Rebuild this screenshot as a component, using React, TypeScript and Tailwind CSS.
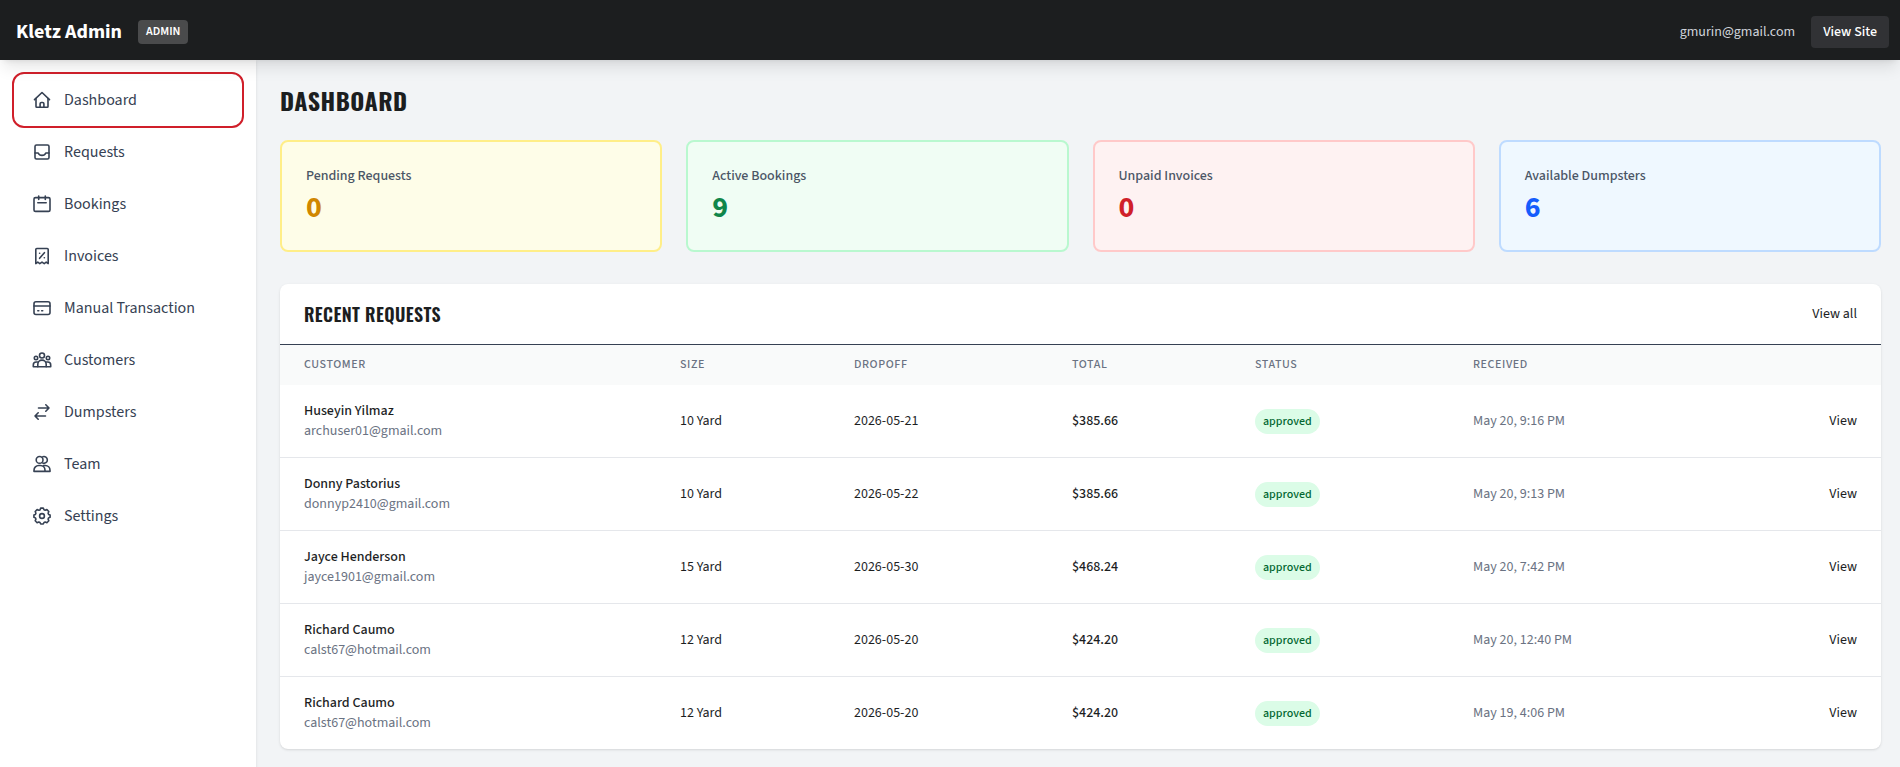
import clsx from 'clsx'

type IconProps = { children: React.ReactNode }

const Icon = ({ children }: IconProps) => (
  <svg
    viewBox="0 0 20 20"
    className="h-5 w-5 shrink-0"
    fill="none"
    stroke="currentColor"
    strokeWidth="1.6"
    strokeLinecap="round"
    strokeLinejoin="round"
    aria-hidden="true"
  >
    {children}
  </svg>
)

const navItems = [
  {
    label: 'Dashboard',
    icon: (
      <>
        <path d="M2.5 9.6 10 2.500l7.500 7.100" />
        <path d="M4 8.500v8c0 .4.300.7.700.7h10.600c.4 0 .7-.3.7-.7v-8" />
        <path d="M8.100 17v-3.200c0-.8.600-1.300 1.300-1.300h1.200c.7 0 1.300.5 1.300 1.300V17" />
      </>
    ),
  },
  {
    label: 'Requests',
    icon: (
      <>
        <rect x="3" y="3" width="14" height="14" rx="1.5" />
        <path d="M3 11h3.200c.6 1.500 2 2.400 3.800 2.400s3.200-.9 3.800-2.400H17" />
      </>
    ),
  },
  {
    label: 'Bookings',
    icon: (
      <>
        <rect x="2" y="3.600" width="16" height="13.800" rx="1.500" />
        <path d="M6.700 2v3.400M13.300 2v3.400M5.800 8.800h8.400" />
      </>
    ),
  },
  {
    label: 'Invoices',
    icon: (
      <>
        <path d="M3.800 17.600V3.500c0-.6.4-1 1-1h10.400c.6 0 1 .4 1 1v14.100l-2-1.500-2 1.500-2.200-1.500-2.200 1.500-2-1.500z" />
        <path d="M7.600 12.300l4.800-5.600" />
        <path d="M7.600 7.200h.1M12.300 11.800h.1" />
      </>
    ),
  },
  {
    label: 'Manual Transaction',
    icon: (
      <>
        <rect x="2" y="3.800" width="16" height="12.700" rx="2" />
        <path d="M2 8h16M5.800 12.700h1M9.700 12.700h1" />
      </>
    ),
  },
  {
    label: 'Customers',
    icon: (
      <>
        <circle cx="10" cy="5.500" r="2.500" />
        <circle cx="4" cy="8" r="1.700" />
        <circle cx="16" cy="8" r="1.700" />
        <path d="M5.800 16.800v-2.500a4.200 4.200 0 0 1 8.400 0v2.500" />
        <path d="M5.500 12H4.200a2.900 2.900 0 0 0-2.900 2.900v1.900h17.400v-1.900a2.900 2.900 0 0 0-2.900-2.900h-1.300" />
      </>
    ),
  },
  {
    label: 'Dumpsters',
    icon: <path d="M6.500 6H17M13.800 2.800 17 6l-3.200 3.200M13.500 14H3M6.200 10.800 3 14l3.200 3.200" />,
  },
  {
    label: 'Team',
    icon: (
      <>
        <circle cx="7.600" cy="5.900" r="3.400" />
        <path d="M10.800 2.700a3.400 3.400 0 1 1 0 6.400" />
        <path d="M2 17.400v-1.200a4.700 4.700 0 0 1 4.700-4.700h1.600a4.700 4.700 0 0 1 4.700 4.700v1.200zM13 17.400h5v-1.200a4.700 4.700 0 0 0-4.700-4.700h-1.800" />
      </>
    ),
  },
  {
    label: 'Settings',
    icon: (
      <>
        <circle cx="10" cy="10" r="2.400" />
        <path d="M8.700 2.100h2.600l.7 1.700 1.200.5 1.700-.7 1.900 1.900-.7 1.700.5 1.200 1.500.6v2.200l-1.500.7-.5 1.200.7 1.700-1.900 1.900-1.700-.7-1.200.5-.7 1.500H8.700L8 16.500l-1.200-.5-1.700.7-1.900-1.900.7-1.700-.5-1.200-1.500-.7V9l1.500-.6.5-1.200-.7-1.700 1.900-1.900 1.700.7L8 3.900z" />
      </>
    ),
  },
]

const stats = [
  { label: 'Pending Requests', value: 0, box: 'border-[#ffee88] bg-[#fefde8]', number: 'text-[#d08700]' },
  { label: 'Active Bookings', value: 9, box: 'border-[#b9f8cf] bg-[#f0fdf4]', number: 'text-[#10864a]' },
  { label: 'Unpaid Invoices', value: 0, box: 'border-[#ffc9c9] bg-[#fef2f2]', number: 'text-[#d01f2a]' },
  { label: 'Available Dumpsters', value: 6, box: 'border-[#bedbff] bg-[#eff8ff]', number: 'text-[#155dfc]' },
]

const requests = [
  { name: 'Huseyin Yilmaz', email: 'archuser01@gmail.com', size: '10 Yard', dropoff: '2026-05-21', total: '$385.66', received: 'May 20, 9:16 PM' },
  { name: 'Donny Pastorius', email: 'donnyp2410@gmail.com', size: '10 Yard', dropoff: '2026-05-22', total: '$385.66', received: 'May 20, 9:13 PM' },
  { name: 'Jayce Henderson', email: 'jayce1901@gmail.com', size: '15 Yard', dropoff: '2026-05-30', total: '$468.24', received: 'May 20, 7:42 PM' },
  { name: 'Richard Caumo', email: 'calst67@hotmail.com', size: '12 Yard', dropoff: '2026-05-20', total: '$424.20', received: 'May 20, 12:40 PM' },
  { name: 'Richard Caumo', email: 'calst67@hotmail.com', size: '12 Yard', dropoff: '2026-05-20', total: '$424.20', received: 'May 19, 4:06 PM' },
]

const Header = () => (
  <header className="relative z-10 flex items-center justify-between bg-[#1c1e1f] pt-4 pr-[11px] pb-3 pl-4 shadow-lg">
    <div className="flex items-center gap-4">
      <span className="text-xl leading-6 font-bold text-white">Kletz Admin</span>
      <span className="rounded bg-[#4a4b4c] px-2 py-1 text-xs font-semibold text-white">ADMIN</span>
    </div>
    <div className="flex items-center gap-4">
      <span className="text-sm text-gray-300">gmurin@gmail.com</span>
      <a href="#site" className="rounded bg-[#313235] px-3 py-1.5 text-sm font-medium text-white">
        View Site
      </a>
    </div>
  </header>
)

const Sidebar = () => (
  <aside className="w-64 shrink-0 bg-white p-4 shadow-sm">
    <nav className="flex flex-col gap-1">
      {navItems.map((item, i) => (
        <a
          key={item.label}
          href={`#${item.label.toLowerCase().replace(' ', '-')}`}
          className={clsx(
            'flex h-12 items-center gap-3 rounded-lg px-4 text-base text-gray-700',
            i === 0 && 'outline-2 outline-offset-2 outline-[#d01f2a]'
          )}
        >
          <Icon>{item.icon}</Icon>
          {item.label}
        </a>
      ))}
    </nav>
  </aside>
)

const RecentRequests = () => (
  <section className="mt-8 overflow-hidden rounded-lg bg-white shadow-sm">
    <div className="flex items-center justify-between border-b border-gray-700 px-6 py-4">
      <h2 className="font-['Oswald','Noto_Sans_CJK_SC',sans-serif] text-lg font-semibold tracking-[0.02em]">RECENT REQUESTS</h2>
      <a href="#requests" className="text-sm">View all</a>
    </div>
    <table className="w-full text-left text-sm">
      <thead className="bg-[#f9fafa] text-xs tracking-wider text-gray-500">
        <tr className="h-10">
          <th className="w-[400px] pl-6 font-medium">CUSTOMER</th>
          <th className="w-[174px] font-medium">SIZE</th>
          <th className="w-[218px] font-medium">DROPOFF</th>
          <th className="w-[183px] font-medium">TOTAL</th>
          <th className="w-[218px] font-medium">STATUS</th>
          <th className="font-medium">RECEIVED</th>
          <th />
        </tr>
      </thead>
      <tbody>
        {requests.map((r, i) => (
          <tr key={i} className="border-b border-gray-200 last:border-0">
            <td className="py-4 pl-6">
              <div className="font-medium">{r.name}</div>
              <div className="text-gray-500">{r.email}</div>
            </td>
            <td>{r.size}</td>
            <td>{r.dropoff}</td>
            <td className="font-medium">{r.total}</td>
            <td>
              <span className="rounded-full bg-[#dbfce7] px-2 py-1 text-xs font-medium text-green-800">approved</span>
            </td>
            <td className="text-gray-500">{r.received}</td>
            <td className="pr-6 text-right"><a href="#view">View</a></td>
          </tr>
        ))}
      </tbody>
    </table>
  </section>
)

export default function App() {
  return (
    <div className="flex min-h-screen flex-col bg-[#f2f4f6] font-['Source_Sans_3','Source_Sans_Pro','Noto_Sans_CJK_SC',sans-serif] text-[#1c1e1f]">
      <Header />
      <div className="flex grow">
        <Sidebar />
        <main className="min-w-0 grow py-6 pr-[19px] pl-6">
          <h1 className="font-['Oswald','Noto_Sans_CJK_SC',sans-serif] text-2xl font-bold tracking-[0.02em]">DASHBOARD</h1>
          <div className="mt-6 grid grid-cols-4 gap-6">
            {stats.map((s) => (
              <div key={s.label} className={clsx('h-28 rounded-lg border-2 p-6', s.box)}>
                <div className="text-sm font-medium text-gray-600">{s.label}</div>
                <div className={clsx('mt-1 text-3xl font-bold', s.number)}>{s.value}</div>
              </div>
            ))}
          </div>
          <RecentRequests />
        </main>
      </div>
    </div>
  )
}
